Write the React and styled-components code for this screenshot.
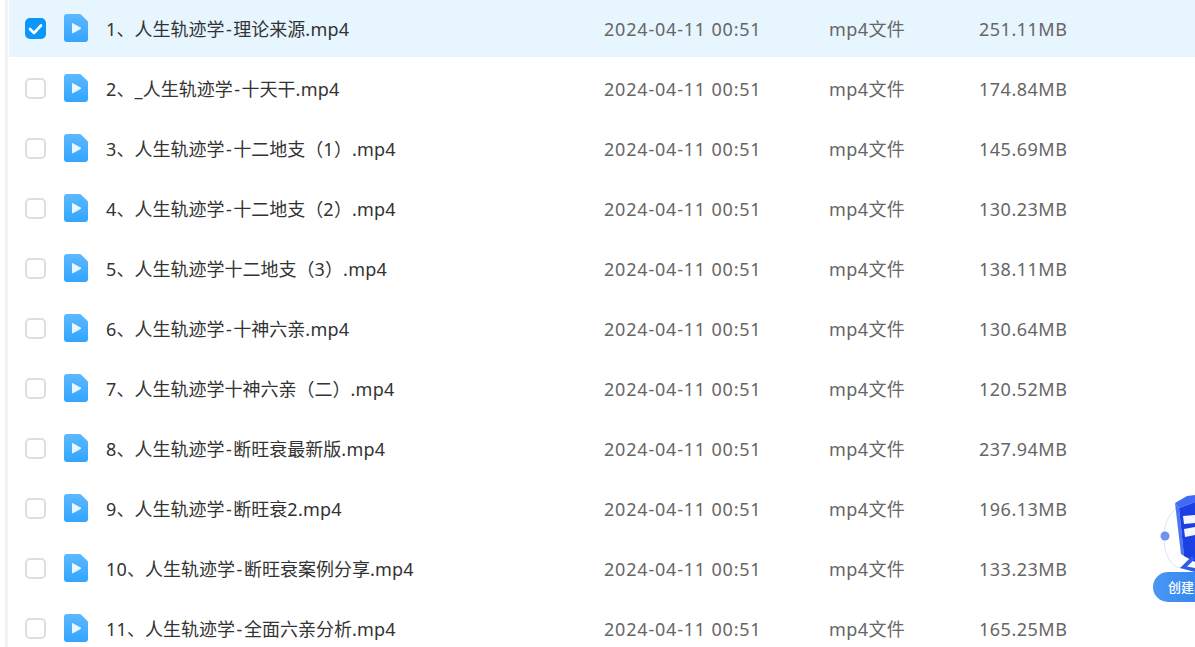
import React from "react"
import styled, { createGlobalStyle } from "styled-components"

const GlobalStyle = createGlobalStyle`
  html, body {
    margin: 0;
    padding: 0;
    height: 100%;
    background: #fff;
    overflow: hidden;
  }
  body {
    font-family: "Noto Sans", "Noto Sans CJK SC", sans-serif;
  }
`

const Page = styled.div`
  position: relative;
  height: 647px;
  overflow: hidden;
  padding-left: 5px;
`

const List = styled.div`
  height: 650px;
  margin-top: -3px;
  border-left: 3px solid #f2f2f2;
  padding-left: 1px;
`

const Row = styled.div`
  display: grid;
  grid-template-columns: 16px 21px 18px 24px 18px 498px 225px 150px 1fr;
  align-items: center;
  box-sizing: border-box;
  height: 60px;
  padding-top: 3px;
  font-size: 18px;
  line-height: 24px;
  background: ${p => (p.$active ? "#e6f5fe" : "transparent")};
`

const Box = styled.span`
  grid-column: 2;
  display: flex;
  align-items: center;
  justify-content: center;
  box-sizing: border-box;
  width: 21px;
  height: 21px;
  border-radius: 5px;
  border: ${p => (p.$checked ? "none" : "2px solid #dedede")};
  background: ${p => (p.$checked ? "#0a96fb" : "#fff")};
`

const IconCell = styled.span`
  grid-column: 4;
  display: flex;
  margin-bottom: 1px;
`

const Name = styled.span`
  grid-column: 6;
  color: #333;
  white-space: nowrap;
`

const Dash = styled.span`
  padding: 0 1.5px;
`

const Latin = styled.span`
  letter-spacing: 0.25px;
`

const Meta = styled.span`
  color: #666;
  white-space: nowrap;
  letter-spacing: ${p => p.$spacing || "0"};
`

const Promo = styled.div`
  position: absolute;
  right: 0;
  top: 494px;
  width: 42px;
  height: 108px;
  overflow: hidden;
`

const PromoButton = styled.div`
  position: absolute;
  left: 0;
  top: 78px;
  width: 80px;
  height: 30px;
  border-radius: 15px;
  background: linear-gradient(90deg, #4a97f3, #1f74ea);
  color: #fff;
  font-size: 13px;
  font-weight: 500;
  line-height: 30px;
  padding-left: 15px;
  white-space: nowrap;
`

const files = [
  ["1、人生轨迹学-理论来源.mp4", "251.11MB"],
  ["2、_人生轨迹学-十天干.mp4", "174.84MB"],
  ["3、人生轨迹学-十二地支（1）.mp4", "145.69MB"],
  ["4、人生轨迹学-十二地支（2）.mp4", "130.23MB"],
  ["5、人生轨迹学十二地支（3）.mp4", "138.11MB"],
  ["6、人生轨迹学-十神六亲.mp4", "130.64MB"],
  ["7、人生轨迹学十神六亲（二）.mp4", "120.52MB"],
  ["8、人生轨迹学-断旺衰最新版.mp4", "237.94MB"],
  ["9、人生轨迹学-断旺衰2.mp4", "196.13MB"],
  ["10、人生轨迹学-断旺衰案例分享.mp4", "133.23MB"],
  ["11、人生轨迹学-全面六亲分析.mp4", "165.25MB"],
]

// the hyphen and latin runs are a bit wider in the original font
const renderName = name =>
  name.split(/(-|[0-9a-z_.]+)/).map((part, i) => {
    if (part === "-") return <Dash key={i}>-</Dash>
    if (/^[0-9a-z_.]+$/.test(part)) return <Latin key={i}>{part}</Latin>
    return part
  })

const VideoIcon = ({ id }) => (
  <svg width="24" height="28" viewBox="0 0 24 28">
    <defs>
      <linearGradient id={id} x1="0" y1="0" x2="0" y2="1">
        <stop offset="0" stopColor="#5cb8ff" />
        <stop offset="1" stopColor="#32a5ff" />
      </linearGradient>
    </defs>
    <path d="M3 0H15.5Q16.5 0 17.2 .7L23.3 6.8Q24 7.5 24 8.5V25A3 3 0 0 1 21 28H3A3 3 0 0 1 0 25V3A3 3 0 0 1 3 0Z" fill={`url(#${id})`} />
    <path d="M8.5 9.5L17 14.3L8.5 19Z" fill="#e9f6ff" strokeLinejoin="round" stroke="#e9f6ff" strokeWidth="1" />
  </svg>
)

const Check = () => (
  <svg width="15" height="12" viewBox="0 0 15 12">
    <path d="M2 6L6 10L13 2.5" fill="none" stroke="#fff" strokeWidth="2.6" strokeLinecap="round" strokeLinejoin="round" />
  </svg>
)

const Monitor = () => (
  <svg width="42" height="80" viewBox="0 0 42 80">
    <ellipse cx="28" cy="44" rx="17" ry="30" fill="none" stroke="#d5e3fb" strokeWidth="1" />
    <circle cx="12" cy="42" r="4.5" fill="#6f92ec" />
    <path d="M22 9L34 2L42 1V8L26 14Z" fill="#3f6cf2" />
    <path d="M22 9L26 14L31 62L28 60Z" fill="#4878f0" />
    <path d="M26 14L42 8V68L31 62Z" fill="#1b3fe2" />
    <path d="M30 22L42 21V29L31 30ZM31 35L42 33V41L32 43Z" fill="#f4f6ff" />
    <path d="M39 62L27 74L42 78V74L34 72.5L42 65Z" fill="#2a5fe6" />
  </svg>
)

export default function App() {
  return (
    <Page>
      <GlobalStyle />
      <List>
        {files.map(([name, size], i) => (
          <Row key={name} $active={i === 0}>
            <Box $checked={i === 0}>{i === 0 && <Check />}</Box>
            <IconCell><VideoIcon id={`video-${i}`} /></IconCell>
            <Name>{renderName(name)}</Name>
            <Meta $spacing="0.8px">2024-04-11 00:51</Meta>
            <Meta $spacing="0.4px">mp4文件</Meta>
            <Meta $spacing="0.5px">{size}</Meta>
          </Row>
        ))}
      </List>
      <Promo>
        <Monitor />
        <PromoButton>创建副本</PromoButton>
      </Promo>
    </Page>
  )
}
